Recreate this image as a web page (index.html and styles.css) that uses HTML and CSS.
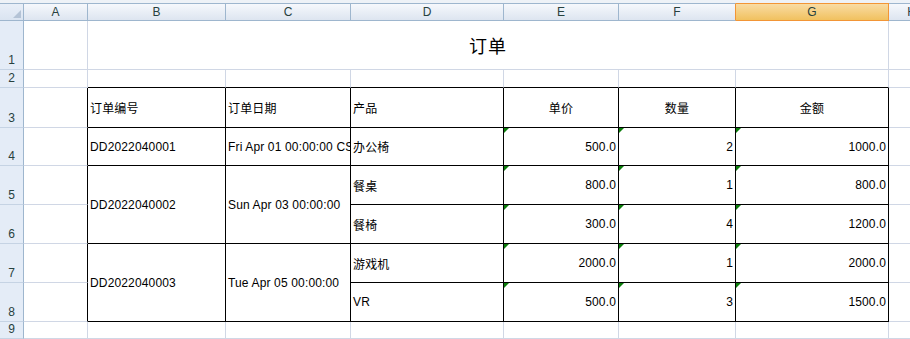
FILE: index.html
```html
<!DOCTYPE html>
<html lang="zh">
<head>
<meta charset="utf-8">
<title>订单</title>
<link rel="stylesheet" href="styles.css">
</head>
<body>
<div class="sheet">
  <div class="corner"><svg width="8" height="8" viewBox="0 0 8 8"><polygon points="8,0 8,8 0,8" fill="#b4c3d6"/></svg></div>
  <div class="ch">A</div>
  <div class="ch">B</div>
  <div class="ch">C</div>
  <div class="ch">D</div>
  <div class="ch">E</div>
  <div class="ch before-sel">F</div>
  <div class="ch sel">G</div>
  <div class="ch">H</div>

  <div class="rh">1</div>
  <div class="c"></div>
  <div class="c title">订单</div>
  <div class="c"></div>

  <div class="rh">2</div>
  <div class="c"></div>
  <div class="c top-edge"></div>
  <div class="c top-edge"></div>
  <div class="c top-edge"></div>
  <div class="c top-edge"></div>
  <div class="c top-edge"></div>
  <div class="c top-edge"></div>
  <div class="c"></div>

  <div class="rh">3</div>
  <div class="c left-edge"></div>
  <div class="c t">订单编号</div>
  <div class="c t">订单日期</div>
  <div class="c t">产品</div>
  <div class="c t ctr">单价</div>
  <div class="c t ctr">数量</div>
  <div class="c t ctr">金额</div>
  <div class="c"></div>

  <div class="rh">4</div>
  <div class="c left-edge"></div>
  <div class="c t">DD2022040001</div>
  <div class="c t">Fri Apr 01 00:00:00 CST 2022</div>
  <div class="c t">办公椅</div>
  <div class="c t num">500.0</div>
  <div class="c t num">2</div>
  <div class="c t num">1000.0</div>
  <div class="c"></div>

  <div class="rh">5</div>
  <div class="c left-edge"></div>
  <div class="c t span2">DD2022040002</div>
  <div class="c t span2">Sun Apr 03 00:00:00</div>
  <div class="c t">餐桌</div>
  <div class="c t num">800.0</div>
  <div class="c t num">1</div>
  <div class="c t num">800.0</div>
  <div class="c"></div>

  <div class="rh">6</div>
  <div class="c left-edge"></div>
  <div class="c t">餐椅</div>
  <div class="c t num">300.0</div>
  <div class="c t num">4</div>
  <div class="c t num">1200.0</div>
  <div class="c"></div>

  <div class="rh">7</div>
  <div class="c left-edge"></div>
  <div class="c t span2">DD2022040003</div>
  <div class="c t span2">Tue Apr 05 00:00:00</div>
  <div class="c t">游戏机</div>
  <div class="c t num">2000.0</div>
  <div class="c t num">1</div>
  <div class="c t num">2000.0</div>
  <div class="c"></div>

  <div class="rh">8</div>
  <div class="c left-edge"></div>
  <div class="c t">VR</div>
  <div class="c t num">500.0</div>
  <div class="c t num">3</div>
  <div class="c t num">1500.0</div>
  <div class="c"></div>

  <div class="rh">9</div>
  <div class="c"></div>
  <div class="c"></div>
  <div class="c"></div>
  <div class="c"></div>
  <div class="c"></div>
  <div class="c"></div>
  <div class="c"></div>
  <div class="c"></div>
</div>
</body>
</html>
```

FILE: styles.css
```css
html, body {
  margin: 0;
  padding: 0;
  background: #ffffff;
}
body {
  width: 910px;
  height: 339px;
  overflow: hidden;
  font-family: "Liberation Sans", "Noto Sans CJK SC", sans-serif;
}
.sheet {
  display: grid;
  grid-template-columns: 24px 64px 138px 125px 153px 115px 117px 153px 46px;
  grid-template-rows: 18px 49px 18px 40px 38px 39px 39px 39px 39px 17px;
  padding-top: 3px;
  background: #eef2f7;
  width: 935px;
}
.corner {
  box-sizing: border-box;
  background: linear-gradient(#e9eff8, #dae4f1);
  border-top: 1px solid #9eb6ce;
  border-right: 1px solid #9eb6ce;
  border-bottom: 1px solid #9eb6ce;
  display: flex;
  justify-content: flex-end;
  align-items: flex-end;
  padding: 0 2px 2px 0;
}
.ch {
  box-sizing: border-box;
  background: linear-gradient(#f6f8fc, #dde5f0);
  border-top: 1px solid #9eb6ce;
  border-right: 1px solid #9eb6ce;
  border-bottom: 1px solid #9eb6ce;
  display: flex;
  justify-content: center;
  align-items: center;
  font-size: 12px;
  color: #27413e;
  overflow: hidden;
}
.ch.before-sel {
  border-right-color: #f29536;
}
.ch.sel {
  background: linear-gradient(#f9dca4, #f1c15f);
  border-color: #f29536;
}
.rh {
  box-sizing: border-box;
  background: #e4ecf7;
  border-right: 1px solid #9eb6ce;
  border-bottom: 1px solid #c5d3e4;
  display: flex;
  justify-content: center;
  align-items: flex-end;
  font-size: 12px;
  line-height: 14px;
  color: #27413e;
  padding-bottom: 2px;
}
.c {
  box-sizing: border-box;
  background: #ffffff;
  border-right: 1px solid #d0d7e5;
  border-bottom: 1px solid #d0d7e5;
  display: flex;
  align-items: center;
  padding: 0 2px;
  font-size: 12px;
  letter-spacing: 0.15px;
  color: #000000;
  white-space: nowrap;
  overflow: hidden;
  min-width: 0;
  position: relative;
}
.title {
  grid-column: span 6;
  justify-content: center;
  font-size: 18px;
  letter-spacing: 1px;
  font-family: "Noto Sans CJK SC", sans-serif;
}
.top-edge {
  border-bottom-color: #000000;
}
.left-edge {
  border-right-color: #000000;
}
.t {
  border-right-color: #000000;
  border-bottom-color: #000000;
}
.span2 {
  grid-row: span 2;
}
.ctr {
  justify-content: center;
}
.num {
  justify-content: flex-end;
}
.num::before {
  content: "";
  position: absolute;
  top: 0;
  left: 0;
  width: 0;
  height: 0;
  border-top: 5px solid #0a7d0a;
  border-right: 5px solid transparent;
}
```
